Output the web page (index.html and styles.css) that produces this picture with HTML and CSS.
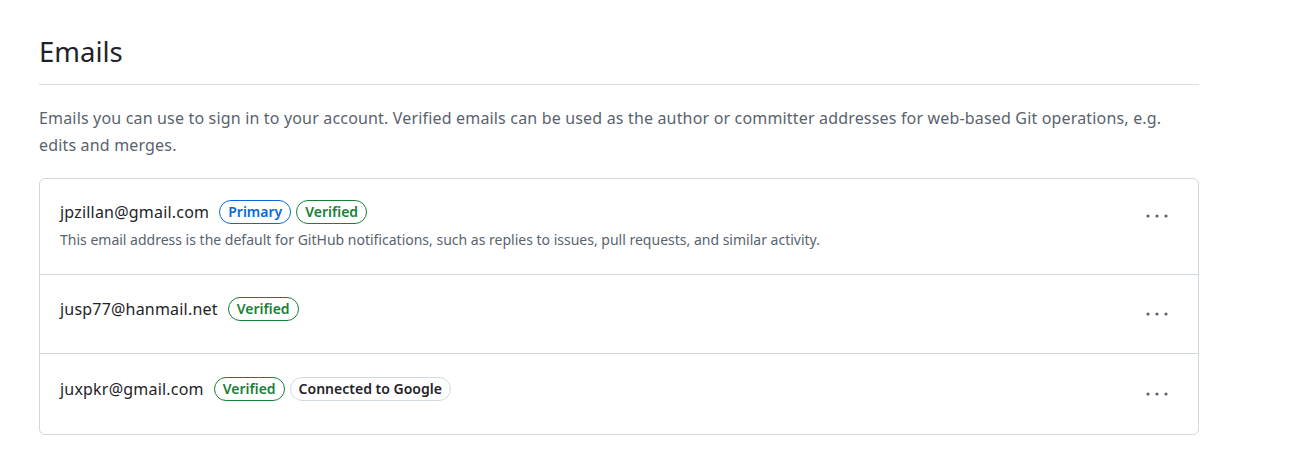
FILE: index.html
```html
<!DOCTYPE html>
<html>
<head>
<meta charset="utf-8">
<link rel="stylesheet" href="styles.css">
</head>
<body>
<div class="page">
  <h2 class="subhead">Emails</h2>
  <p class="intro">Emails you can use to sign in to your account. Verified emails can be used as the author or committer addresses for web-based Git operations, e.g. edits and merges.</p>
  <ul class="box">
    <li class="row row-first">
      <div class="info">
        <div class="line">
          <span class="email">jpzillan@gmail.com</span>
          <span class="label label-blue">Primary</span>
          <span class="label label-green">Verified</span>
        </div>
        <p class="note">This email address is the default for GitHub notifications, such as replies to issues, pull requests, and similar activity.</p>
      </div>
      <button class="kebab" aria-label="More"><svg width="22" height="16" viewBox="0 0 22 16"><circle cx="2" cy="8" r="1.6"/><circle cx="11" cy="8" r="1.6"/><circle cx="20" cy="8" r="1.6"/></svg></button>
    </li>
    <li class="row row-mid">
      <div class="info">
        <div class="line">
          <span class="email">jusp77@hanmail.net</span>
          <span class="label label-green">Verified</span>
        </div>
      </div>
      <button class="kebab" aria-label="More"><svg width="22" height="16" viewBox="0 0 22 16"><circle cx="2" cy="8" r="1.6"/><circle cx="11" cy="8" r="1.6"/><circle cx="20" cy="8" r="1.6"/></svg></button>
    </li>
    <li class="row row-last">
      <div class="info">
        <div class="line">
          <span class="email">juxpkr@gmail.com</span>
          <span class="label label-green">Verified</span>
          <span class="label label-gray">Connected to Google</span>
        </div>
      </div>
      <button class="kebab" aria-label="More"><svg width="22" height="16" viewBox="0 0 22 16"><circle cx="2" cy="8" r="1.6"/><circle cx="11" cy="8" r="1.6"/><circle cx="20" cy="8" r="1.6"/></svg></button>
    </li>
  </ul>
</div>
</body>
</html>
```

FILE: styles.css
```css
* { box-sizing: border-box; }
body {
  margin: 0;
  background: #ffffff;
  color: #1f2328;
  font-family: "Noto Sans", "Open Sans", sans-serif;
}
.page {
  width: 1160px;
  margin-left: 39px;
  padding-top: 30px;
}
.subhead {
  margin: 0;
  font-size: 27.5px;
  font-weight: 400;
  line-height: 44px;
  padding-bottom: 10px;
  border-bottom: 1px solid #d8dee4;
}
.intro {
  margin: 20px 0 19px;
  font-size: 16px;
  line-height: 27px;
  color: #59636e;
  letter-spacing: 0.17px;
}
.box {
  list-style: none;
  margin: 0;
  padding: 0;
  border: 1px solid #d1d9e0;
  border-radius: 6px;
}
.row {
  display: flex;
  align-items: center;
  padding: 0 20px;
  border-top: 1px solid #d1d9e0;
}
.row:first-child { border-top: none; }
.row-first { height: 95px; }
.row-mid { height: 79px; }
.row-last { height: 81px; }
.info { flex: 1; }
.row-first .info { padding-bottom: 4px; }
.row-mid .info, .row-last .info { padding-bottom: 10px; }
.line {
  display: flex;
  align-items: center;
  gap: 5px;
}
.email {
  font-size: 16px;
  margin-right: 5px;
  letter-spacing: 0.2px;
}
.label {
  display: inline-block;
  font-size: 14px;
  font-weight: 600;
  line-height: 22px;
  padding: 0 8px;
  border: 1px solid;
  border-radius: 12px;
}
.label-blue { color: #0969da; border-color: #0969da; }
.label-green { color: #1a7f37; border-color: #1a7f37; }
.label-gray { color: #1f2328; border-color: #d1d9e0; }
.note {
  margin: 6px 0 0;
  font-size: 14px;
  line-height: 20px;
  color: #59636e;
}
.kebab {
  background: none;
  border: none;
  padding: 0;
  margin-right: 10px;
  width: 22px;
  height: 16px;
  display: flex;
  align-items: center;
  justify-content: center;
}
.row-first .kebab { align-self: flex-start; margin-top: 29px; }
.kebab svg { fill: #59636e; }
```
